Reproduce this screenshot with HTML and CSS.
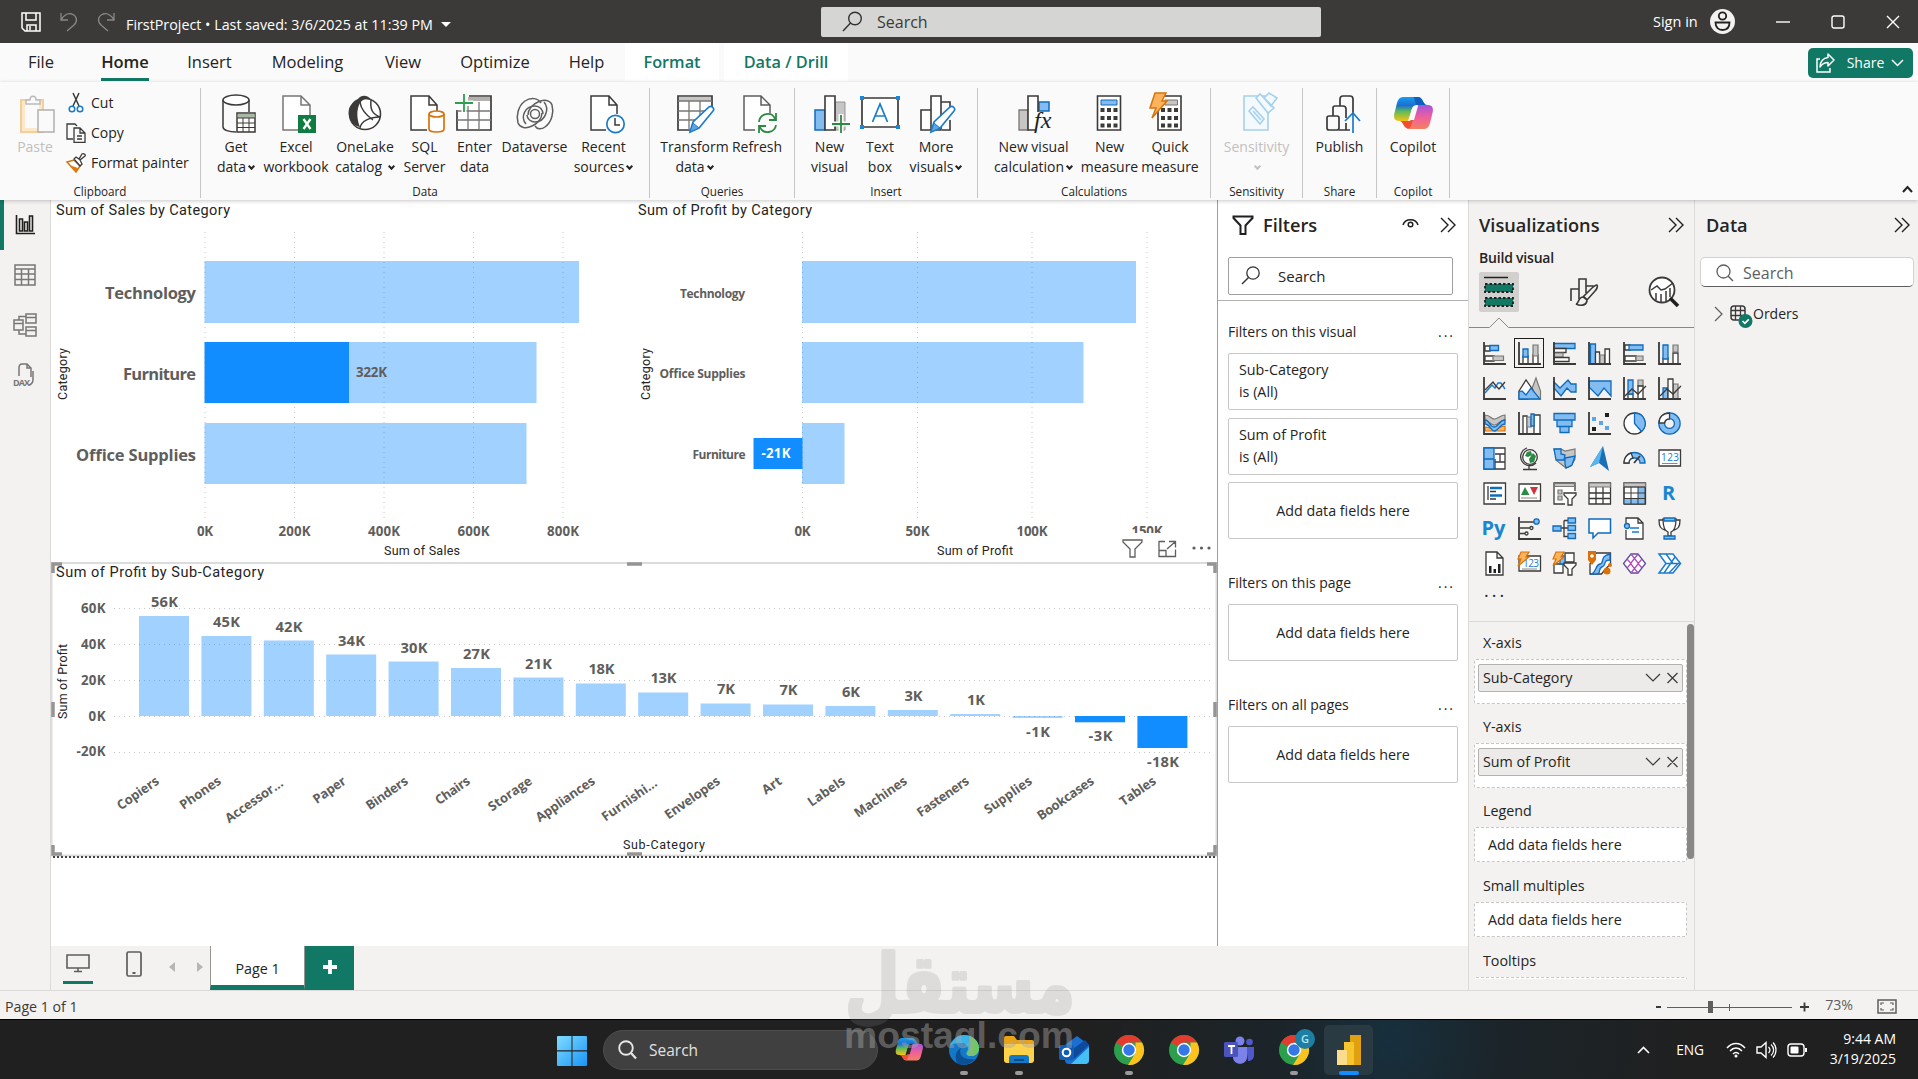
FILE: index.html
```html
<!DOCTYPE html>
<html lang="en">
<head>
    <meta charset="UTF-8">
    <meta name="viewport" content="width=device-width, initial-scale=1.0">
    <title>FirstProject</title>
    <link rel="stylesheet" href="styles.css">
</head>
<body>

    <header class="titlebar">
        <div class="quick">
            <svg width="20" height="20" viewBox="0 0 20 20"><path d="M1 1h18v18H4l-3-3zM5 1v7h10V1M6 19v-6h9v6M9 14v4" fill="none" stroke="#fff" stroke-width="1.5"/></svg>
            <svg width="18" height="20" viewBox="0 0 18 20"><path d="M1 1v7h7M1 8c3-5 7-7 11-6 5 2 6 7 2 11l-7 6" fill="none" stroke="#8a8886" stroke-width="1.3"/></svg>
            <svg width="18" height="20" viewBox="0 0 18 20"><path d="M17 1v7h-7M17 8c-3-5-7-7-11-6-5 2-6 7-2 11l7 6" fill="none" stroke="#8a8886" stroke-width="1.3"/></svg>
        </div>
        <div class="doc-name">FirstProject • Last saved: 3/6/2025 at 11:39 PM <i class="caret"></i></div>
        <div class="top-search">
            <svg width="21" height="21" viewBox="0 0 21 21"><circle cx="13" cy="7.5" r="6.3" fill="none" stroke="#333" stroke-width="1.4"/><path d="M8.5 12L1 20" stroke="#333" stroke-width="1.5"/></svg>
            <span>Search</span>
        </div>
        <div class="account">
            <span>Sign in</span>
            <svg width="25" height="25" viewBox="0 0 25 25"><circle cx="12.500" cy="12.500" r="12.500" fill="#f3f2f1"/><circle cx="12.500" cy="7" r="3.700" fill="none" stroke="#222" stroke-width="1.800"/><path d="M5.500 13.500h14c0 5-3 7.500-7 7.500s-7-2.500-7-7.500z" fill="none" stroke="#222" stroke-width="1.800"/></svg>
        </div>
        <div class="window-buttons">
            <svg width="14" height="14" viewBox="0 0 14 14"><path d="M0 7h14" stroke="#fff" stroke-width="1.4"/></svg>
            <svg width="14" height="14" viewBox="0 0 14 14"><rect x="1" y="1" width="12" height="12" rx="2" fill="none" stroke="#fff" stroke-width="1.4"/></svg>
            <svg width="14" height="14" viewBox="0 0 14 14"><path d="M1 1l12 12M13 1L1 13" stroke="#fff" stroke-width="1.4"/></svg>
        </div>
    </header>

    <nav class="tabs">
        <a>File</a>
        <a class="active"><b>Home</b></a>
        <a>Insert</a>
        <a>Modeling</a>
        <a>View</a>
        <a>Optimize</a>
        <a>Help</a>
        <a class="contextual">Format</a>
        <a class="contextual drill">Data / Drill</a>
        <button class="share">
            <svg width="19" height="20" viewBox="0 0 19 20"><path d="M4 6H1v13h13v-4" fill="none" stroke="#fff" stroke-width="1.500"/><path d="M12 1l6 6-6 6V9.500C8 9.500 6 11 4 14c0-5 3-9 8-9.500z" fill="none" stroke="#fff" stroke-width="1.500" stroke-linejoin="round"/></svg>
            <span>Share</span>
            <svg width="13" height="8" viewBox="0 0 13 8"><path d="M1 1l5.500 5.500L12 1" fill="none" stroke="#fff" stroke-width="1.500"/></svg>
        </button>
    </nav>

    <section class="ribbon">
        <div class="group clipboard">
            <div class="items">
                <div class="cmd disabled">
                    <svg viewBox="0 0 40 40"><path d="M6 6h22v32H6z" fill="#fbe8c9" stroke="#f3cf9b" stroke-width="2"/><path d="M10 10h14v24H10z" fill="#fafafa"/><path d="M11 10V6h4c0-5 6-5 6 0h4v4z" fill="#fafafa" stroke="#bbb" stroke-width="1.500"/><path d="M23 16h16v22H23z" fill="#fafafa" stroke="#b3b0ad" stroke-width="1.500"/></svg>
                    <span>Paste</span>
                </div>
                <ul>
                    <li><svg width="20" height="20" viewBox="0 0 20 20"><path d="M7 0l6 13M13 0L7 13" stroke="#3b3a39" stroke-width="1.500"/><circle cx="6" cy="16" r="2.800" fill="none" stroke="#1a7bc7" stroke-width="1.500"/><circle cx="14" cy="16" r="2.800" fill="none" stroke="#1a7bc7" stroke-width="1.500"/></svg>Cut</li>
                    <li><svg width="20" height="20" viewBox="0 0 20 20"><path d="M7 16H1V1h8l2 2" fill="none" stroke="#3b3a39" stroke-width="1.300"/><path d="M8 5h6l5 5v9.400H8zM14 5v5h5M11 13h5M11 16h5" fill="none" stroke="#3b3a39" stroke-width="1.300"/></svg>Copy</li>
                    <li><svg width="20" height="20" viewBox="0 0 20 20"><path d="M1 9l7-2 6 6-4 6z" fill="#fff" stroke="#d8730b" stroke-width="1.500"/><path d="M3 12l9 3-2 4z" fill="#e07b10"/><path d="M8 6l2-2 3 2 3-5c2-1 4 1 3 2l-5 4 2 4-2 2z" fill="#fff" stroke="#3b3a39" stroke-width="1.300"/></svg>Format painter</li>
                </ul>
            </div>
            <div class="group-name">Clipboard</div>
        </div>
        <div class="group data">
            <div class="items">
                <div class="cmd">
                    <svg viewBox="0 0 40 40"><path d="M7 6v27c0 3 6 5 13 5M33 6v12" fill="none" stroke="#3b3a39" stroke-width="1.500"/><ellipse cx="20" cy="6" rx="13" ry="5" fill="#fff" stroke="#3b3a39" stroke-width="1.500"/><path d="M21 19h18v19H21z" fill="#fff" stroke="#3b3a39" stroke-width="1.500"/><path d="M21.700 20h17v4h-17z" fill="#a9b8a4"/><path d="M21 24h18M21 29h18M21 33.500h18M27 24v14M33 24v14" stroke="#3b3a39"/></svg>
                    <span>Get<br>data<i class="dd"></i></span>
                </div>
                <div class="cmd">
                    <svg viewBox="0 0 40 40"><path d="M22 36H7V2h18l9 9v10M25 2v9h9" fill="#fff" stroke="#797775" stroke-width="1.500"/><path d="M22 21h18v18H22z" fill="#107c41"/><path d="M27.500 25l7 10M34.500 25l-7 10" stroke="#fff" stroke-width="2.300"/></svg>
                    <span>Excel<br>workbook</span>
                </div>
                <div class="cmd">
                    <svg viewBox="0 0 40 40"><circle cx="20" cy="20" r="15.500" fill="#fff" stroke="#3b3a39" stroke-width="1.600"/><path d="M13 5C15 1 23 0 26 6c-5-2-8-1-11 3-4 7-3 17 0 24C4 31 1 17 6 11c2-3 4-5 7-6z" fill="#3b3a39"/><path d="M15 8c1 8 6 13 13 18M26 6c-1 9 1 14 9 17M15 34c1-7 10-11 20-11" fill="none" stroke="#3b3a39" stroke-width="1.500"/></svg>
                    <span>OneLake<br>catalog <i class="dd"></i></span>
                </div>
                <div class="cmd">
                    <svg viewBox="0 0 40 40"><path d="M22 36H6V2h18l8 9v6M24 2v9h8" fill="#fff" stroke="#3b3a39" stroke-width="1.500"/><path d="M24 20v15c0 4 15 4 15 0V20" fill="#fff" stroke="#d8730b" stroke-width="1.700"/><ellipse cx="31.500" cy="20" rx="7.500" ry="3" fill="#fff" stroke="#d8730b" stroke-width="1.700"/></svg>
                    <span>SQL<br>Server</span>
                </div>
                <div class="cmd">
                    <svg viewBox="0 0 40 40"><path d="M2 16v20h34V2H14" fill="#fff" stroke="#3b3a39" stroke-width="1.700"/><path d="M13 3h22v4H13z" fill="#b3b0ad"/><path d="M2 17h34M2 26h34M13 12v24M24 8v28" stroke="#797775" stroke-width="1.300"/><path d="M0 9h18M9 0v18" stroke="#fafafa" stroke-width="5"/><path d="M0 9h18M9 0v18" stroke="#2e9e4f" stroke-width="1.800"/></svg>
                    <span>Enter<br>data</span>
                </div>
                <div class="cmd">
                    <svg viewBox="0 0 40 40"><g fill="none" stroke="#605e5c" stroke-width="1.500"><circle cx="20" cy="20" r="4.500"/><path d="M27 19c0 6-5 11-10 13-6 3-12 2-14-3C1 22 3 12 10 7c6-4 13-3 16 2"/><path d="M13 21c0-6 5-11 10-13 6-3 12-2 14 3 2 7 0 17-7 22-4 3-8 2-10-1"/><path d="M11 30c-6-7-1-18 9-18 5 0 8 4 8 8M29 8c6 7 1 20-9 20-4 0-8-3-8-7"/></g></svg>
                    <span>Dataverse</span>
                </div>
                <div class="cmd">
                    <svg viewBox="0 0 40 40"><path d="M22 36H7V2h18l8 9v9M25 2v9h8" fill="#fff" stroke="#3b3a39" stroke-width="1.500"/><circle cx="31.500" cy="30" r="8.700" fill="#fff" stroke="#1a7bc7" stroke-width="1.700"/><path d="M31 24v7h5" fill="none" stroke="#3b3a39" stroke-width="1.500"/></svg>
                    <span>Recent<br>sources<i class="dd"></i></span>
                </div>
            </div>
            <div class="group-name">Data</div>
        </div>
        <div class="group queries">
            <div class="items">
                <div class="cmd">
                    <svg viewBox="0 0 40 40"><path d="M37 13V2H3v34h13" fill="#fff" stroke="#3b3a39" stroke-width="1.700"/><path d="M4 3h32v4H4z" fill="#c8c6c4"/><path d="M3 7h34M3 17h28M3 26h18M14 7v29M25 7v15" stroke="#797775" stroke-width="1.300"/><path d="M15 38l3-10 16-15c3-2 6 2 4 4L24 34z" fill="#fff" stroke="#1a7bc7" stroke-width="1.600"/><path d="M15 38l3-9 6 5z" fill="#5aa6e6" stroke="#1a7bc7"/></svg>
                    <span>Transform<br>data<i class="dd"></i></span>
                </div>
                <div class="cmd">
                    <svg viewBox="0 0 40 40"><path d="M18 36H7V2h17l9 9v8M24 2v9h9" fill="#fff" stroke="#605e5c" stroke-width="1.500"/><path d="M22 28c1-9 13-11 16-3M39 19v7h-7M39 31c-1 8-13 10-16 2M22 39v-7h7" fill="none" stroke="#2b8a44" stroke-width="1.800"/></svg>
                    <span>Refresh</span>
                </div>
            </div>
            <div class="group-name">Queries</div>
        </div>
        <div class="group insert">
            <div class="items">
                <div class="cmd">
                    <svg viewBox="0 0 40 40"><path d="M25 8h10v28H25z" fill="#c8c6c4" stroke="#979593"/><path d="M5 16h10v20H5z" fill="#83bcf0" stroke="#0f6cbd" stroke-width="1.500"/><path d="M15 2h10v34H15z" fill="#fff" stroke="#3b3a39" stroke-width="1.600"/><path d="M21 30h19M31 20v19" stroke="#fafafa" stroke-width="5"/><path d="M22 30h18M31 21v18" stroke="#2b8a44" stroke-width="1.800"/></svg>
                    <span>New<br>visual</span>
                </div>
                <div class="cmd">
                    <svg viewBox="0 0 40 40"><path d="M2 4h36v29H2z" fill="#fff" stroke="#3b3a39" stroke-width="1.700"/><path d="M0 2h4v4H0zM36 2h4v4h-4zM0 31h4v4H0zM36 31h4v4h-4z" fill="#1a86d9"/><path d="M12.500 28L20 10l7.500 18M15 22h10" fill="none" stroke="#1a7bc7" stroke-width="1.700"/></svg>
                    <span>Text<br>box</span>
                </div>
                <div class="cmd">
                    <svg viewBox="0 0 40 40"><path d="M15 16H5v20h10M25 8h9v6M34 26v10h-8M15 2h10v34H15z" fill="#fff" stroke="#3b3a39" stroke-width="1.600"/><path d="M15 38l3-10 16-15c3-2 6 2 4 4L24 34z" fill="#fff" stroke="#1a7bc7" stroke-width="1.600"/><path d="M15 38l3-9 6 5z" fill="#5aa6e6" stroke="#1a7bc7"/></svg>
                    <span>More<br>visuals<i class="dd"></i></span>
                </div>
            </div>
            <div class="group-name">Insert</div>
        </div>
        <div class="group calculations">
            <div class="items">
                <div class="cmd">
                    <svg viewBox="0 0 40 40"><path d="M25 8h10v9H25z" fill="#83bcf0" stroke="#0f6cbd" stroke-width="1.500"/><path d="M5 16h9v20H5z" fill="#c8c6c4" stroke="#797775" stroke-width="1.300"/><path d="M24 18V2H14v34h7" fill="#fff" stroke="#3b3a39" stroke-width="1.600"/><text x="20" y="34" class="fx">fx</text></svg>
                    <span>New visual<br>calculation<i class="dd"></i></span>
                </div>
                <div class="cmd">
                    <svg viewBox="0 0 40 40"><path d="M7.500 2h23v34h-23z" fill="#fff" stroke="#3b3a39" stroke-width="1.600"/><path d="M11 6h16v5H11z" fill="#83bcf0" stroke="#0f6cbd"/><path d="M10.500 16h17M10.500 24h17M10.500 31.500h17" stroke="#3b3a39" stroke-width="4" stroke-dasharray="4 2.500"/></svg>
                    <span>New<br>measure</span>
                </div>
                <div class="cmd">
                    <svg viewBox="0 0 40 40"><path d="M8 2h23v34H8z" fill="#fff" stroke="#3b3a39" stroke-width="1.600"/><path d="M15 6h12.500v5H15z" fill="#c8c6c4" stroke="#797775"/><path d="M11 16h17M11 24h17M11 31.500h17" stroke="#3b3a39" stroke-width="4" stroke-dasharray="4 2.500"/><path d="M5-1h11l-4 8h5L2 24l4-10H0z" fill="#fdb35c" stroke="#d8730b" stroke-width="1.500"/></svg>
                    <span>Quick<br>measure</span>
                </div>
            </div>
            <div class="group-name">Calculations</div>
        </div>
        <div class="group sensitivity">
            <div class="items">
                <div class="cmd disabled">
                    <svg viewBox="0 0 40 40"><g fill="#f3f9fd" stroke="#a5d1ec" stroke-width="1.600"><path d="M7 2h24v34H7z"/><path d="M12 17l4-4 11 12-4 5zM16 17l8 9M19 4l4-4 14 14-6 5zM27 4l5-5 8 5-6 8z"/></g></svg>
                    <span>Sensitivity<br><i class="dd"></i></span>
                </div>
            </div>
            <div class="group-name">Sensitivity</div>
        </div>
        <div class="group publish">
            <div class="items">
                <div class="cmd">
                    <svg viewBox="0 0 40 40"><g fill="none" stroke="#3b3a39" stroke-width="1.700"><rect x="7" y="22" width="12" height="14" rx="2"/><path d="M13 22V14q0-2 2-2h8q3 0 3 3v9M20 12V5q0-3 3-3h7q3 0 3 3v15M19 36h11M26 29v7"/></g><path d="M33 39V20M25 27l8-8 7 8" fill="none" stroke="#1a7bc7" stroke-width="1.700"/></svg>
                    <span>Publish</span>
                </div>
            </div>
            <div class="group-name">Share</div>
        </div>
        <div class="group copilot">
            <div class="items">
                <div class="cmd">
                    <svg viewBox="0 0 40 40">
                        <defs>
                            <linearGradient id="cpA" x1="0" y1="0" x2="0" y2="1"><stop offset="0" stop-color="#1a9bf0"/><stop offset=".35" stop-color="#1b6fd0"/><stop offset=".6" stop-color="#5dbb5a"/><stop offset="1" stop-color="#f5c414"/></linearGradient>
                            <linearGradient id="cpB" x1="0" y1="0" x2="0" y2="1"><stop offset="0" stop-color="#a554e0"/><stop offset=".5" stop-color="#ee5f9b"/><stop offset="1" stop-color="#f58060"/></linearGradient>
                        </defs>
                        <path d="M10 3h15c5 0 5 8 9 8H24c-4 0-5 3-6 7l-3 9H6c-5 0-6-4-4-10l2-8c1-4 3-6 6-6z" fill="url(#cpA)"/>
                        <path d="M20 3h5c5 0 5 8 9 8H24c-2 0-2-8-4-8z" fill="#0f5fc0"/>
                        <path d="M31 35H16c-5 0-5-8-9-8h9c4 0 5-3 6-7l3-9h10c5 0 6 4 4 10l-2 8c-1 4-3 6-6 6z" fill="url(#cpB)"/>
                        <path d="M7 27h10l4-5-3 10c-1 3-4 3-6 1-2-2-2-5-5-6z" fill="#f0502f"/>
                        <path d="M22 12h3l-4 14h-5l2-8c1-3 2-6 4-6z" fill="#fafafa"/>
                    </svg>
                    <span>Copilot</span>
                </div>
            </div>
            <div class="group-name">Copilot</div>
        </div>
        <svg class="collapse" width="11" height="8" viewBox="0 0 11 8"><path d="M1 7l4.500-5L10 7" fill="none" stroke="#222" stroke-width="2"/></svg>
    </section>

    <main class="workspace">
        <aside class="rail">
            <span class="active"><svg width="20" height="20" viewBox="0 0 20 20"><path d="M1.500 0v18.500H20M4.500 4h3v12h-3zM9.500 7h3v9h-3zM14.500 1h3v15h-3z" fill="none" stroke="#201f1e" stroke-width="1.600"/></svg></span>
            <span><svg width="22" height="22" viewBox="0 0 22 22"><path d="M1 1h20v20H1zM1 5h20M1 10h20M1 15.500h20M7.500 5v16M14.500 5v16" fill="none" stroke="#797775" stroke-width="1.500"/></svg></span>
            <span><svg width="24" height="24" viewBox="0 0 24 24"><path d="M1 7h9v10H1zM1 10.500h9M13 1h10v9H13zM13 4.500h10M13 14h10v9H13zM13 17.500h10M6 7V3.500h7M6 17v4h7" fill="none" stroke="#797775" stroke-width="1.500"/></svg></span>
            <span><svg width="24" height="24" viewBox="0 0 24 24"><path d="M6 13V5q0-4 3-4h5l4 4v9M14 1v4h4M20 8v8q0 5-4 6" fill="none" stroke="#797775" stroke-width="1.500"/><text x="0" y="22.500" class="dax" textLength="17">DAX</text></svg></span>
        </aside>

        <div class="report">
            <div class="canvas">
                <div class="row">
                    <!-- sales by category -->
                    <svg class="chart" width="583" height="362" viewBox="51 200 583 362">
                        <text x="56" y="215" class="title" textLength="174">Sum of Sales by Category</text>
                        <path class="grid" d="M205 232v288M294.500 232v288M384 232v288M473.500 232v288M563 232v288"/>
                        <g class="light">
                            <rect x="204.500" y="261" width="374.500" height="62"/>
                            <rect x="349" y="342" width="187.500" height="61"/>
                            <rect x="204.500" y="423" width="322" height="61"/>
                        </g>
                        <rect class="strong" x="204.500" y="342" width="144.500" height="61"/>
                        <g class="cat-lg">
                            <text x="105" y="299" textLength="91">Technology</text>
                            <text x="123" y="380" textLength="73">Furniture</text>
                            <text x="76" y="461" textLength="120">Office Supplies</text>
                        </g>
                        <text x="356" y="377" class="num" textLength="31">322K</text>
                        <g class="num mid">
                            <text x="205" y="536" textLength="16">0K</text>
                            <text x="294.500" y="536" textLength="32">200K</text>
                            <text x="384" y="536" textLength="32">400K</text>
                            <text x="473.500" y="536" textLength="32">600K</text>
                            <text x="563" y="536" textLength="32">800K</text>
                        </g>
                        <text x="384" y="555" class="axis" textLength="76">Sum of Sales</text>
                        <text transform="translate(67 400) rotate(-90)" class="axis" textLength="52">Category</text>
                    </svg>
                    <!-- profit by category -->
                    <svg class="chart" width="583" height="362" viewBox="634 200 583 362">
                        <text x="638" y="215" class="title" textLength="174">Sum of Profit by Category</text>
                        <path class="grid" d="M802.500 232v288M917.500 232v288M1032 232v288M1147 232v288"/>
                        <g class="light">
                            <rect x="802" y="261" width="334" height="62"/>
                            <rect x="802" y="342" width="281.500" height="61"/>
                            <rect x="802" y="423" width="42.500" height="61"/>
                        </g>
                        <rect class="strong" x="753.500" y="438" width="49" height="31"/>
                        <g class="cat-sm">
                            <text x="680" y="298" textLength="65">Technology</text>
                            <text x="659.500" y="378" textLength="86">Office Supplies</text>
                            <text x="692.500" y="459" textLength="53">Furniture</text>
                        </g>
                        <text x="761.500" y="458" class="num on-bar" textLength="29">-21K</text>
                        <g class="num mid">
                            <text x="802.500" y="536" textLength="16">0K</text>
                            <text x="917.500" y="536" textLength="24">50K</text>
                            <text x="1032" y="536" textLength="31">100K</text>
                            <text x="1147" y="536" textLength="31">150K</text>
                        </g>
                        <path d="M1112 533h105v29h-105z" fill="#fff"/>
                        <text x="937" y="555" class="axis" textLength="76">Sum of Profit</text>
                        <text transform="translate(650 400) rotate(-90)" class="axis" textLength="52">Category</text>
                        <g fill="none" stroke="#605e5c" stroke-width="1.300">
                            <path d="M1123 540h19v2l-7 7v8h-5v-8l-7-7z"/>
                            <path d="M1165 541.500h-6v15h16.500v-7M1169 541.500h6.500v6M1167 549l8-7M1159 550.500h7v6"/>
                        </g>
                        <g fill="#605e5c"><circle cx="1194" cy="548" r="1.600"/><circle cx="1201.500" cy="548" r="1.600"/><circle cx="1209" cy="548" r="1.600"/></g>
                    </svg>
                </div>
                <!-- profit by sub-category, selected -->
                <svg class="chart" width="1166" height="296" viewBox="51 562 1166 296">
                    <path d="M51 563h1166M51.500 563v292M1216.500 563v292M51 855.500h1166" fill="none" stroke="#dcdcdc" stroke-width="2"/>
                    <path d="M53 857h1163" stroke="#444" stroke-width="2" stroke-dasharray="2 2"/>
                    <path d="M53 573v-9h9M627 564h15M1207 564h8v9M53 702v15M1215 702v15M53 845v9h9M627 854h15M1207 854h8v-9" fill="none" stroke="#979593" stroke-width="3.500"/>
                    <text x="56" y="577" class="title" textLength="208">Sum of Profit by Sub-Category</text>
                    <path class="grid" d="M114 608.500h1100M114 644.500h1100M114 680.500h1100M114 716.500h1100M114 752.500h1100"/>
                    <g class="light">
                        <rect x="139" y="616" width="50" height="100"/>
                        <rect x="201.400" y="636" width="50" height="80"/>
                        <rect x="263.800" y="640.500" width="50" height="75.500"/>
                        <rect x="326.200" y="654.500" width="50" height="61.500"/>
                        <rect x="388.600" y="661.500" width="50" height="54.500"/>
                        <rect x="451" y="668" width="50" height="48"/>
                        <rect x="513.400" y="677.500" width="50" height="38.500"/>
                        <rect x="575.800" y="683.500" width="50" height="32.500"/>
                        <rect x="638.200" y="692.500" width="50" height="23.500"/>
                        <rect x="700.600" y="703.500" width="50" height="12.500"/>
                        <rect x="763" y="704.500" width="50" height="11.500"/>
                        <rect x="825.400" y="706" width="50" height="10"/>
                        <rect x="887.800" y="710" width="50" height="6"/>
                        <rect x="950.200" y="714" width="50" height="2"/>
                        <rect x="1012.600" y="716" width="50" height="2"/>
                    </g>
                    <rect class="strong" x="1075" y="716" width="50" height="6.300"/>
                    <rect class="strong" x="1137.400" y="716" width="50" height="32"/>
                    <g class="num end">
                        <text x="105.500" y="613" textLength="24.500">60K</text>
                        <text x="105.500" y="649" textLength="24.500">40K</text>
                        <text x="105.500" y="685" textLength="24.500">20K</text>
                        <text x="105.500" y="721" textLength="17">0K</text>
                        <text x="105.500" y="756" textLength="29">-20K</text>
                    </g>
                    <g class="val mid">
                        <text x="164.500" y="607" textLength="27">56K</text>
                        <text x="226.500" y="627" textLength="27">45K</text>
                        <text x="289" y="632" textLength="27">42K</text>
                        <text x="351.500" y="646" textLength="27">34K</text>
                        <text x="414" y="653" textLength="27">30K</text>
                        <text x="476.500" y="659" textLength="27">27K</text>
                        <text x="538.500" y="669" textLength="27">21K</text>
                        <text x="601.500" y="674" textLength="26">18K</text>
                        <text x="663.500" y="683" textLength="26">13K</text>
                        <text x="726" y="694" textLength="18">7K</text>
                        <text x="788.500" y="695" textLength="18">7K</text>
                        <text x="851" y="697" textLength="18">6K</text>
                        <text x="913.500" y="701" textLength="18">3K</text>
                        <text x="976" y="705" textLength="18">1K</text>
                        <text x="1038" y="737" textLength="24">-1K</text>
                        <text x="1100.500" y="741" textLength="24">-3K</text>
                        <text x="1163" y="767" textLength="32">-18K</text>
                    </g>
                    <g class="slant end">
                        <text transform="translate(160 783) rotate(-35)" textLength="48">Copiers</text>
                        <text transform="translate(222 783) rotate(-35)" textLength="47">Phones</text>
                        <text transform="translate(284 785) rotate(-35)" textLength="67">Accessor…</text>
                        <text transform="translate(347 783) rotate(-35)" textLength="37">Paper</text>
                        <text transform="translate(409 783) rotate(-35)" textLength="48">Binders</text>
                        <text transform="translate(471 783) rotate(-35)" textLength="39">Chairs</text>
                        <text transform="translate(533 783) rotate(-35)" textLength="50">Storage</text>
                        <text transform="translate(596 783) rotate(-35)" textLength="69">Appliances</text>
                        <text transform="translate(658 785) rotate(-35)" textLength="64">Furnishi…</text>
                        <text transform="translate(721 783) rotate(-35)" textLength="64">Envelopes</text>
                        <text transform="translate(783 783) rotate(-35)" textLength="21">Art</text>
                        <text transform="translate(846 783) rotate(-35)" textLength="42">Labels</text>
                        <text transform="translate(908 783) rotate(-35)" textLength="61">Machines</text>
                        <text transform="translate(970 783) rotate(-35)" textLength="60">Fasteners</text>
                        <text transform="translate(1033 783) rotate(-35)" textLength="55">Supplies</text>
                        <text transform="translate(1095 783) rotate(-35)" textLength="66">Bookcases</text>
                        <text transform="translate(1157 783) rotate(-35)" textLength="41">Tables</text>
                    </g>
                    <text x="623" y="849" class="axis" textLength="82">Sub-Category</text>
                    <text transform="translate(67 719) rotate(-90)" class="axis" textLength="75">Sum of Profit</text>
                </svg>
            </div>

            <aside class="filters">
                <div class="pane-head">
                    <svg width="22" height="20" viewBox="0 0 22 20"><path d="M1.500 1.500h19v1.500l-7 7.500V19h-5v-8.500L1.500 3z" fill="none" stroke="#201f1e" stroke-width="2"/></svg>
                    <h2>Filters</h2>
                    <svg class="eye" width="17" height="10" viewBox="0 0 17 10"><path d="M1 7c2-7 13-7 15 0" fill="none" stroke="#201f1e" stroke-width="1.500"/><circle cx="8.500" cy="6.500" r="2.300" fill="none" stroke="#201f1e" stroke-width="1.500"/></svg>
                    <svg width="16" height="16" viewBox="0 0 16 16"><path d="M1 1l7 7-7 7M8 1l7 7-7 7" fill="none" stroke="#201f1e" stroke-width="1.400"/></svg>
                </div>
                <div class="filter-search">
                    <svg width="19" height="19" viewBox="0 0 19 19"><circle cx="12" cy="7" r="6.200" fill="none" stroke="#333" stroke-width="1.300"/><path d="M7.500 11.500L1 18" stroke="#333" stroke-width="1.400"/></svg>
                    <span>Search</span>
                </div>
                <div class="filter-list">
                    <h3>Filters on this visual <i>...</i></h3>
                    <div class="card">Sub-Category<br>is (All)</div>
                    <div class="card">Sum of Profit<br>is (All)</div>
                    <div class="card drop">Add data fields here</div>
                    <h3>Filters on this page <i>...</i></h3>
                    <div class="card drop">Add data fields here</div>
                    <h3>Filters on all pages <i>...</i></h3>
                    <div class="card drop">Add data fields here</div>
                </div>
            </aside>

            <div class="pages">
                <div class="layouts">
                    <span class="active"><svg width="24" height="20" viewBox="0 0 24 20"><path d="M1 2h22v13H1zM12 15v3M8 18.500h8" fill="none" stroke="#605e5c" stroke-width="1.600"/></svg></span>
                    <svg width="16" height="26" viewBox="0 0 16 26"><rect x="1" y="1" width="14" height="24" rx="1.500" fill="none" stroke="#605e5c" stroke-width="1.700"/><path d="M6.500 22h3" stroke="#605e5c" stroke-width="2"/></svg>
                    <i class="prev"></i>
                    <i class="next"></i>
                </div>
                <div class="page-tab">Page 1</div>
                <div class="add-page"><svg width="14" height="14" viewBox="0 0 14 14"><path d="M7 0v14M0 7h14" stroke="#fff" stroke-width="3.800"/></svg></div>
            </div>
        </div>

        <aside class="viz">
            <div class="pane-head">
                <h2>Visualizations</h2>
                <svg width="16" height="16" viewBox="0 0 16 16"><path d="M1 1l7 7-7 7M8 1l7 7-7 7" fill="none" stroke="#201f1e" stroke-width="1.400"/></svg>
            </div>
            <div class="build">Build visual</div>
            <div class="modes">
                <span class="active"><svg width="30" height="32" viewBox="0 0 30 32"><path d="M0 1.500h24" stroke="#201f1e" stroke-width="1.500"/><path d="M1 8h28v8H1zM1 22h28v8H1z" fill="#117865" stroke="#201f1e" stroke-width="1.800" stroke-dasharray="2.500 2"/></svg></span>
                <span class="format"><svg width="30" height="30" viewBox="0 0 30 30"><path d="M2 24V12h8v10M10 14V2h7v14M17 9h7v3" fill="none" stroke="#3b3a39" stroke-width="1.600"/><path d="M28 8c1 1 0 4-2 6l-8 9-4-3 8-8c2-2 4-4 6-4zM14 20c2 0 4 2 4 4-1 5-7 5-11 3 3 0 2-7 7-7z" fill="#f3f2f0" stroke="#3b3a39" stroke-width="1.600"/></svg></span>
                <span><svg width="32" height="32" viewBox="0 0 32 32"><circle cx="14" cy="14" r="12.500" fill="#fff" stroke="#3b3a39" stroke-width="1.800"/><path d="M3 14l6-4 4 4 4-1 8-6" fill="none" stroke="#3b3a39" stroke-width="1.500"/><path d="M8 24v-7M13 26v-8M18 25V15M22 21V12" stroke="#3b3a39" stroke-width="1.500"/><path d="M22 22l8 8" stroke="#201f1e" stroke-width="3.500"/></svg></span>
            </div>
            <svg class="notch" width="225" height="16" viewBox="0 0 225 16"><path d="M0 15.500h20.500l9.500-9.500 9.500 9.500H225" fill="none" stroke="#8a8886"/></svg>
            <div class="gallery">
                <span><svg viewBox="0 0 23 23"><path d="M2 4h5v5H2z" class="w"/><path d="M7 3.500h8.500v5H7z" class="b"/><path d="M2 14h9v5H2z" class="w"/><path d="M10 14h10.500v4.500H10z" class="g"/><path d="M1 0v22h22" class="k"/></svg></span>
                <span class="picked"><svg viewBox="0 0 23 23"><path d="M5 14h5v8H5zM15 13h5v9h-5z" class="w"/><path d="M5 7h5v8H5z" class="b"/><path d="M15 3h5v11h-5z" class="g"/><path d="M1 0v22h22" class="k"/></svg></span>
                <span><svg viewBox="0 0 23 23"><path d="M1 1.500h21v5H1z" class="b"/><path d="M1 6.500h12v4H1z" class="w"/><path d="M1 11h9v4H1z" class="g"/><path d="M1 15.500h15v4H1z" class="w"/><path d="M1 0v22h22" class="k"/></svg></span>
                <span><svg viewBox="0 0 23 23"><path d="M2.500 2h5v20h-5z" class="b"/><path d="M7.500 10h4v12h-4z" class="w"/><path d="M12 13h4.500v9H12z" class="g"/><path d="M17 7h4.500v15H17z" class="w"/><path d="M1 0v22h22" class="k"/></svg></span>
                <span><svg viewBox="0 0 23 23"><path d="M2 3h5v5H2zM2 14h11v5H2z" class="w"/><path d="M6 3h14v5H6z" class="b"/><path d="M13 14h7v4.500h-7z" class="g"/><path d="M1 0v22h22" class="k"/></svg></span>
                <span><svg viewBox="0 0 23 23"><path d="M5 16h5v6H5zM15 11h5v11h-5z" class="w"/><path d="M5 3h5v14H5z" class="b"/><path d="M15 3h5v7h-5z" class="g"/><path d="M1 0v22h22" class="k"/></svg></span>

                <span><svg viewBox="0 0 23 23"><path d="M2 16l7-8 3 3 3-5 3 0 4 6" class="bl"/><path d="M2 13l8-8 3 4 3 3 6-7" class="kl"/><path d="M1 0v22h22" class="k"/></svg></span>
                <span><svg viewBox="0 0 23 23"><path d="M10 22l8-21 4.500 13v8z" class="g"/><path d="M1 14L8 3l7 10-5 9H1z" class="w"/><path d="M1 22v-7l3-1 4 4 5-7 9 11z" class="b"/></svg></span>
                <span><svg viewBox="0 0 23 23"><path d="M1 5l6 6 8-8 3 4h5v8h-5l-4-4-6 8-7-8z" class="b"/><path d="M1 0v22h22" class="k"/></svg></span>
                <span><svg viewBox="0 0 23 23"><path d="M1 4h22v15l-7-8-6 8-9-9z" class="b"/><path d="M1 0v22h22" class="k"/></svg></span>
                <span><svg viewBox="0 0 23 23"><path d="M15 3h5v6h-5z" class="g"/><path d="M5 17h5v5H5zM15 9h5v13h-5z" class="w"/><path d="M5 3h5v14H5z" class="b"/><path d="M2 19l7-7 6 5 8-8" class="kl"/><path d="M1 0v22h22" class="k"/></svg></span>
                <span><svg viewBox="0 0 23 23"><path d="M15 7h5v15h-5z" class="g"/><path d="M5 11h5v11H5z" class="b"/><path d="M10 2h5v20h-5z" class="w"/><path d="M2 19l7-7 6 5 8-8" class="kl"/><path d="M1 0v22h22" class="k"/></svg></span>

                <span><svg viewBox="0 0 23 23"><path d="M2 15c5 0 5 2 9 2s6-3 11-3v5H2z" class="o"/><path d="M2 3c6 0 6 5 10 4s6-4 10-4v5c-5 0-6 4-10 5S7 9 2 9z" class="g"/><path d="M2 8c5 0 4 7 9 7s5-7 11-7v4c-5 0-6 6-10 7S7 12 2 12z" class="b"/><path d="M1 0v22h22" class="k"/></svg></span>
                <span><svg viewBox="0 0 23 23"><path d="M5 4h4v18H5zM16 3h6v19h-6z" class="w"/><path d="M9 5h4v10H9z" class="g"/><path d="M13 2h3v12h-3z" class="b"/><path d="M1 0v22h22" class="k"/></svg></span>
                <span><svg viewBox="0 0 23 23"><path d="M1 1.500h21V8H1zM4 8h15v6.500H4zM7 14.500h9v6H7z" class="b"/></svg></span>
                <span><svg viewBox="0 0 23 23"><path d="M4 5h4v4H4zM11 9h4v4h-4zM17 14h4v4h-4z" fill="#5aa6e6"/><path d="M17 1h4v4h-4zM4 15h4v4H4z" fill="#201f1e"/><path d="M1 0v22h22" class="k"/></svg></span>
                <span><svg viewBox="0 0 23 23"><circle cx="11.500" cy="11.500" r="10.500" class="w"/><path d="M11.500 1a10.500 10.500 0 0 1 7 18.500l-7-8z" class="b"/></svg></span>
                <span><svg viewBox="0 0 23 23"><circle cx="11.500" cy="11.500" r="7.800" fill="none" stroke="#0f6cbd" stroke-width="7"/><circle cx="11.500" cy="11.500" r="7.800" fill="none" stroke="#83bcf0" stroke-width="4.500"/><path d="M11.500 1v6A5 5 0 0 0 6.500 11H1C1 5 5 1 11.500 1z" class="w"/></svg></span>

                <span><svg viewBox="0 0 23 23"><path d="M1 1h21v21H1zM12 12v10M12 7h10M17 7v8M12 15h10" class="w"/><path d="M1 1h10v21H1zM1 12h10" class="b"/></svg></span>
                <span><svg viewBox="0 0 23 23"><path d="M9 1a9 9 0 1 0 9 15M11 19v3M5 22.500h14" class="kl"/><circle cx="12" cy="10" r="7.300" class="w"/><path d="M9 5l4-1 1 4-4 2-3-1zM15 6l3 3-2 6-4 1-1-4z" fill="#2b8a44"/></svg></span>
                <span><svg viewBox="0 0 23 23"><path d="M1 2h7l4 2 10-2v10l-4 7-5 2-9-7z" class="g"/><path d="M1 2h7v5l4 1-1 5H3zM12 11l10-2-3 9-6 3-1-4z" class="b"/></svg></span>
                <span><svg viewBox="0 0 23 23"><path d="M15-1L2 20l9-4 10 8z" fill="#1a6fb5"/><path d="M15-1L2 20l9-4z" fill="#58b6ee"/></svg></span>
                <span><svg viewBox="0 0 23 23"><path d="M1 16a10.500 10.500 0 0 1 21 0h-5c0-3-2-5-5.500-5S6 13 6 16z" class="b"/><path d="M1 16C1 11 4 7 8 6l2 5c-2 0-4 2-4 5z" class="w"/><path d="M11 16l6-7" class="k"/></svg></span>
                <span><svg viewBox="0 0 23 23"><path d="M1 3h21.500v16H1z" class="w"/><path d="M4 16.500h15.500" stroke="#8a8886" fill="none"/><text x="3" y="13.500" class="t123" textLength="18">123</text></svg></span>

                <span><svg viewBox="0 0 23 23"><path d="M1 1h21.500v21H1z" class="w"/><path d="M5 4v14M7 9.500h6M7 17h6" class="kl"/><path d="M7 6h12M7 13.500h12" stroke="#0f6cbd" stroke-width="2.500"/></svg></span>
                <span><svg viewBox="0 0 23 23"><path d="M1 2h21.500v17H1z" class="w"/><path d="M3 13l4-8 4.500 8z" fill="#2b8a44"/><path d="M12 5h8l-4 8z" fill="#d13438"/><path d="M3 16h16" stroke="#8a8886"/></svg></span>
                <span><svg viewBox="0 0 23 23"><path d="M22 9V1H1v21h11" class="w"/><path d="M1.500 1.500h20v3h-20zM5 8h4v4H5zM5 14h4v4H5z" class="g"/><path d="M11 11h12v2l-4 4v6h-4v-6l-4-4z" class="w"/></svg></span>
                <span><svg viewBox="0 0 23 23"><path d="M1 1h21.500v21H1zM1 11h21M1 16.500h21M8 5v17M15 5v17" class="w"/><path d="M1 1h21.500v4H1z" class="g"/></svg></span>
                <span><svg viewBox="0 0 23 23"><path d="M1 1h21.500v21H1z" class="w"/><path d="M15 5h7v17H1v-5h14z" fill="#83bcf0"/><path d="M1 1h21.500v4H1z" class="g"/><path d="M1 5h21v17H1zM1 11h21M1 16.500h21M8 5v17M15 5v17" class="bl thin"/></svg></span>
                <span class="letter">R</span>

                <span class="letter">Py</span>
                <span><svg viewBox="0 0 23 23"><path d="M2 5h16M2 11h10M2 16.500h5" class="kl"/><circle cx="18.500" cy="4.500" r="2.700" class="b"/><circle cx="13.500" cy="11" r="1.500" class="w"/><circle cx="8.500" cy="16.500" r="1.500" class="w"/><path d="M1 0v22h22" class="k"/></svg></span>
                <span><svg viewBox="0 0 23 23"><path d="M8 11h7M11 3.500v16h4M11 3.500h4" class="kl"/><path d="M0 9h8v5H0zM15 1h7.500v5H15zM15 8.500h7.500v5H15zM15 16.500h7.500v5H15z" class="b"/></svg></span>
                <span><svg viewBox="0 0 23 23"><path d="M1 2h21.500v14H10l-5 5v-5H1z" fill="#fff" stroke="#0f6cbd" stroke-width="1.500"/></svg></span>
                <span><svg viewBox="0 0 23 23"><path d="M3 6V1h12l5 5v16H3V13M15 1v5h5" class="w"/><path d="M7 11h9M9 15h7" class="bl"/><circle cx="4" cy="9" r="2.500" class="b"/></svg></span>
                <span><svg viewBox="0 0 23 23"><path d="M5 3H1c0 7 2 9 6 10M18 3h4c0 7-2 9-6 10M5 2h13c0 9-2 12-5 13v4h-3v-4C7 14 5 11 5 2z" class="w"/><path d="M6 1h11v3H6zM6 19h11v3H6z" class="b"/></svg></span>

                <span><svg viewBox="0 0 23 23"><path d="M3 0h11l6 6v17H3zM14 0v6h6" class="w"/><path d="M6 21v-7h2.500v7zM10.500 21v-4H13v4zM15 21v-9h2.500v9z" fill="#201f1e"/></svg></span>
                <span><svg viewBox="0 0 23 23"><path d="M1 4h21.500v15H1z" class="w"/><path d="M4 17h15" stroke="#8a8886"/><text x="5" y="15" class="t123" textLength="16">123</text><path d="M3 0h8L8 5h3L0 14l3-7H0z" class="o"/></svg></span>
                <span><svg viewBox="0 0 23 23"><path d="M12 1h9v9h-9zM1 12h9v9H1z" class="w"/><path d="M7 4h5v8H7z" class="b"/><path d="M11 11h12v2l-4 4v6h-4v-6l-4-4z" class="w"/><path d="M3 0h8L8 5h3L0 14l3-7H0z" class="o"/></svg></span>
                <span><svg viewBox="0 0 23 23"><path d="M8 1h14.500v11l-5 5-4 5H2V12z" class="w"/><path d="M22 2v6c-8 0-3 6-8 7-4 1-1 7-5 7H4c5-3 3-9 8-10s-1-8 10-10z" class="b"/><path d="M0-1h8v9l-4 5-4-5z" fill="#d8730b"/><circle cx="4" cy="4" r="1.800" fill="#fff"/><circle cx="19" cy="19" r="3.500" fill="#d8730b"/><circle cx="22" cy="13" r="2" fill="#d8730b"/></svg></span>
                <span><svg viewBox="0 0 23 23"><path d="M8 2h7l7.500 9.500L15 21H8L.5 11.500z" fill="#fff" stroke="#5c4ea0" stroke-width="1.300"/><path d="M8 2l7.500 9.500L8 21M15 2L7.500 11.500 15 21M4 7l4 4.500L4 16M19 7l-4 4.500 4 4.500" fill="none" stroke="#b44ac0" stroke-width="1.300"/></svg></span>
                <span><svg viewBox="0 0 23 23"><path d="M1 2h14l7.500 9.500L15 21H1l7-9.500z" fill="#fff" stroke="#1a7bd0" stroke-width="1.500"/><path d="M8 11.500h14M6 21L17 5M11 21l9-9.500M8 2l7 9.500" fill="none" stroke="#1a7bd0" stroke-width="1.400"/></svg></span>
            </div>
            <div class="more">...</div>
            <div class="wells">
                <h4>X-axis</h4>
                <div class="well filled"><div class="chip">Sub-Category <svg width="33" height="12" viewBox="0 0 33 12"><path d="M1 2l7 7 7-7M22.500 1l10 10M32.500 1l-10 10" fill="none" stroke="#3b3a39" stroke-width="1.200"/></svg></div></div>
                <h4>Y-axis</h4>
                <div class="well filled"><div class="chip">Sum of Profit <svg width="33" height="12" viewBox="0 0 33 12"><path d="M1 2l7 7 7-7M22.500 1l10 10M32.500 1l-10 10" fill="none" stroke="#3b3a39" stroke-width="1.200"/></svg></div></div>
                <h4>Legend</h4>
                <div class="well">Add data fields here</div>
                <h4>Small multiples</h4>
                <div class="well">Add data fields here</div>
                <h4>Tooltips</h4>
                <div class="well cut"></div>
                <i class="scrollbar"></i>
            </div>
        </aside>

        <aside class="fields">
            <div class="pane-head">
                <h2>Data</h2>
                <svg width="16" height="16" viewBox="0 0 16 16"><path d="M1 1l7 7-7 7M8 1l7 7-7 7" fill="none" stroke="#201f1e" stroke-width="1.400"/></svg>
            </div>
            <div class="field-search">
                <svg width="18" height="18" viewBox="0 0 18 18"><circle cx="7.500" cy="7.500" r="6.500" fill="none" stroke="#605e5c" stroke-width="1.300"/><path d="M12 12l5 5" stroke="#605e5c" stroke-width="1.400"/></svg>
                <span>Search</span>
            </div>
            <div class="table-row">
                <svg width="9" height="16" viewBox="0 0 9 16"><path d="M1 1l7 7-7 7" fill="none" stroke="#605e5c" stroke-width="1.200"/></svg>
                <svg class="tbl" width="23" height="24" viewBox="0 0 23 24"><rect x="1" y="1" width="14" height="14" rx="3" fill="none" stroke="#3b3a39" stroke-width="1.500"/><path d="M1 5.500h14M1 10.500h14M5.500 1v14M10.500 1v14" stroke="#3b3a39" stroke-width="1.300"/><circle cx="15.500" cy="16" r="7" fill="#117865"/><path d="M12.500 16l2.300 2.300 4-4" fill="none" stroke="#fff" stroke-width="1.700"/></svg>
                <span>Orders</span>
            </div>
        </aside>
    </main>

    <footer class="status">
        <span>Page 1 of 1</span>
        <div class="zoom">
            <svg width="154" height="16" viewBox="0 0 154 16"><path d="M1 8h5M145 8h9M149.500 3.500v9" stroke="#3b3a39" stroke-width="1.800"/><path d="M12 8.500h125M74.500 5v7" stroke="#605e5c"/><path d="M53 2h5v12h-5z" fill="#605e5c"/></svg>
            <span>73%</span>
            <svg width="20" height="15" viewBox="0 0 20 15"><path d="M1 1h18v13H1z" fill="none" stroke="#605e5c" stroke-width="1.500"/><path d="M4 6V4h3M13 4h3v2M16 9v2h-3M7 11H4V9" fill="none" stroke="#605e5c" stroke-width="1.200"/></svg>
        </div>
    </footer>

    <footer class="taskbar">
        <svg class="start" width="30" height="30" viewBox="0 0 30 30"><defs><linearGradient id="win" x1="0" y1="0" x2="1" y2="1"><stop offset="0" stop-color="#7fdcff"/><stop offset="1" stop-color="#1a94f5"/></linearGradient></defs><path d="M1 0h13.500v14.300H0V1q0-1 1-1zM15.500 0H29q1 0 1 1v13.300H15.500zM0 15.500h14.500V30H1q-1 0-1-1zM15.500 15.500H30V29q0 1-1 1H15.500z" fill="url(#win)"/></svg>
        <div class="task-search">
            <svg width="19" height="20" viewBox="0 0 19 20"><circle cx="8" cy="8" r="6.800" fill="none" stroke="#e6e6e6" stroke-width="1.900"/><path d="M13 13l5 5.500" stroke="#e6e6e6" stroke-width="2.200"/></svg>
            <span>Search</span>
        </div>
        <div class="apps">
            <span><svg width="28" height="28" viewBox="0 0 40 40"><path d="M10 3h15c5 0 5 8 9 8H24c-4 0-5 3-6 7l-3 9H6c-5 0-6-4-4-10l2-8c1-4 3-6 6-6z" fill="url(#cpA)"/><path d="M31 35H16c-5 0-5-8-9-8h9c4 0 5-3 6-7l3-9h10c5 0 6 4 4 10l-2 8c-1 4-3 6-6 6z" fill="url(#cpB)"/><path d="M7 27h10l4-5-3 10c-1 3-4 3-6 1-2-2-2-5-5-6z" fill="#f0502f"/><path d="M22 12h3l-4 14h-5l2-8c1-3 2-6 4-6z" fill="#292929"/></svg></span>
            <span class="running"><svg width="30" height="30" viewBox="0 0 30 30"><circle cx="15" cy="15" r="15" fill="#1478c8"/><path d="M1 11C4 3 10 0 15 0c9 0 15 6 15 13 0 5-3 8-8 8-4 0-5-2-4-4 3-5-1-9-6-9S3 9 1 11z" fill="#38b4e8"/><path d="M20 1c6 2 10 7 10 12 0 5-3 8-8 8-4 0-5-2-4-4 3-2 5-8 2-16z" fill="#6ccb5f"/><path d="M12 13c-3 6 2 13 14 11-4 5-11 7-17 5-4-5-3-13 3-16z" fill="#0c4f94"/></svg></span>
            <span class="running"><svg width="30" height="28" viewBox="0 0 30 28"><path d="M0 2q0-2 2-2h8l3 4h15q2 0 2 2v18H0z" fill="#e8a317"/><path d="M0 8h30v16q0 3-3 3H3q-3 0-3-3z" fill="#ffd24a"/><path d="M5 27v-5q0-3 3-3h14q3 0 3 3v5z" fill="#1478c8"/><path d="M10 23h10v2H10z" fill="#0b4f8a"/></svg></span>
            <span><svg width="30" height="28" viewBox="0 0 30 28"><path d="M6 9l12-9 12 9v15q0 4-4 4H10q-4 0-4-4z" fill="#1a6fd0"/><path d="M10 16L26 4l4 5-15 14z" fill="#0d4a9c"/><path d="M12 28l18-17v13q0 4-4 4z" fill="#45c0f5"/><rect y="9" width="15" height="15" rx="2" fill="#0f5fb8"/><circle cx="7.500" cy="16.500" r="3.800" fill="none" stroke="#fff" stroke-width="2"/></svg></span>
            <span class="running"><svg width="30" height="30" viewBox="0 0 30 30" class="chrome"><circle cx="15" cy="15" r="15" fill="#2b9f4c"/><path d="M15 15L2 7.500A15 15 0 0 1 28 7.500H15z" fill="#e33b2e"/><path d="M28 7.500A15 15 0 0 1 14 30l7.500-12V7.500z" fill="#fcc31e"/><circle cx="15" cy="15" r="7.200" fill="#fff"/><circle cx="15" cy="15" r="5.700" fill="#3378e6"/></svg></span>
            <span><svg width="30" height="30" viewBox="0 0 30 30" class="chrome"><circle cx="15" cy="15" r="15" fill="#2b9f4c"/><path d="M15 15L2 7.500A15 15 0 0 1 28 7.500H15z" fill="#e33b2e"/><path d="M28 7.500A15 15 0 0 1 14 30l7.500-12V7.500z" fill="#fcc31e"/><circle cx="15" cy="15" r="7.200" fill="#fff"/><circle cx="15" cy="15" r="5.700" fill="#3378e6"/></svg></span>
            <span><svg width="30" height="28" viewBox="0 0 30 28"><circle cx="16" cy="5" r="4.500" fill="#7b83eb"/><circle cx="25.500" cy="6" r="3.300" fill="#5059c9"/><path d="M22 11h8v8c0 4-3 6-6 6z" fill="#5059c9"/><path d="M9 11h14v10c0 9-14 9-14 0z" fill="#7b83eb"/><rect y="6" width="14" height="15" rx="1.500" fill="#4b53bc"/><path d="M4 10h7M7.500 10v8" stroke="#fff" stroke-width="1.800"/></svg></span>
            <span class="running"><svg width="30" height="30" viewBox="0 0 30 30" class="chrome"><circle cx="15" cy="15" r="15" fill="#2b9f4c"/><path d="M15 15L2 7.500A15 15 0 0 1 28 7.500H15z" fill="#e33b2e"/><path d="M28 7.500A15 15 0 0 1 14 30l7.500-12V7.500z" fill="#fcc31e"/><circle cx="15" cy="15" r="7.200" fill="#fff"/><circle cx="15" cy="15" r="5.700" fill="#3378e6"/></svg><b class="badge">G</b></span>
            <span class="running current"><svg width="24" height="30" viewBox="0 0 24 30"><path d="M13 0h11v30H13z" fill="#e0a010"/><path d="M7 7h10v23H7z" fill="#f6c52c"/><path d="M0 15h10v15H0z" fill="#fbdc8c"/></svg></span>
        </div>
        <div class="tray">
            <svg width="13" height="8" viewBox="0 0 13 8"><path d="M1 7l5.500-5.500L12 7" fill="none" stroke="#fff" stroke-width="1.600"/></svg>
            <span class="lang">ENG</span>
            <svg class="wifi" width="20" height="16" viewBox="0 0 20 16"><path d="M1 6c5-6 13-6 18 0M4 9c3.500-4 8.500-4 12 0M7 12c2-2 4-2 6 0" fill="none" stroke="#fff" stroke-width="1.500"/><circle cx="10" cy="14" r="1.500" fill="#fff"/></svg>
            <svg class="speaker" width="20" height="18" viewBox="0 0 20 18"><path d="M1 6h4l5-4.500v15L5 12H1z" fill="none" stroke="#fff" stroke-width="1.400"/><path d="M12.500 6c2 2 2 4 0 6M15 3.500c3.500 3 3.500 8 0 11M17 1.500c4 4 4 11 0 15" fill="none" stroke="#fff" stroke-width="1.200"/></svg>
            <svg width="21" height="14" viewBox="0 0 21 14"><rect x="1" y="1" width="16" height="12" rx="3" fill="none" stroke="#fff" stroke-width="1.400"/><rect x="3.500" y="3.500" width="8" height="7" rx="1" fill="#fff"/><path d="M19 5v4" stroke="#fff" stroke-width="2"/></svg>
            <div class="clock">9:44 AM<br>3/19/2025</div>
        </div>
    </footer>

    <div class="watermark">
        <svg width="240" height="112" viewBox="0 0 240 112">
            <text transform="translate(235 69) scale(1 1.3)" class="ar" direction="rtl" textLength="230" lengthAdjust="spacingAndGlyphs">مستقل</text>
            <text x="4" y="105" class="en" textLength="230" lengthAdjust="spacingAndGlyphs">mostaql.com</text>
        </svg>
    </div>

</body>
</html>
```
FILE: styles.css
```css
* {
  box-sizing: border-box;
}

body {
  margin: 0;
  width: 1918px;
  height: 1079px;
  overflow: hidden;
  position: relative;
  display: flex;
  flex-direction: column;
  font-family: "Open Sans", "Noto Sans", sans-serif;
  font-size: 14px;
  line-height: 20px;
  color: #252423;
  background: #f3f2f0;
}

h2, h3, h4, ul {
  margin: 0;
  padding: 0;
  font-weight: normal;
}

i {
  font-style: normal;
}

svg {
  display: block;
  flex: none;
  overflow: visible;
}

/* title bar */
.titlebar {
  height: 43px;
  flex: none;
  display: flex;
  align-items: center;
  background: #3b3a38;
  color: #fff;
}

.quick {
  width: 126px;
  padding-left: 21px;
  display: flex;
  gap: 19px;
}

.doc-name {
  width: 695px;
  padding-top: 6px;
  font-size: 14.300px;
  letter-spacing: 0;
  white-space: nowrap;
}

.caret {
  display: inline-block;
  margin: 0 0 3px 4px;
  border: 5px solid transparent;
  border-top-color: #fff;
  border-bottom: 0;
}

.top-search {
  width: 500px;
  height: 30px;
  display: flex;
  align-items: center;
  gap: 14px;
  padding-left: 21px;
  border-radius: 2px;
  background: #d5d5d3;
  color: #3b3a39;
  font-size: 16px;
}

.account {
  width: 415px;
  padding-left: 332px;
  display: flex;
  align-items: center;
  gap: 12px;
  white-space: nowrap;
  font-size: 14.500px;
}

.window-buttons {
  display: flex;
  gap: 41px;
  margin-left: 40px;
}

/* tabs */
.tabs {
  height: 39px;
  flex: none;
  display: grid;
  grid-template-columns: 82px 86px 83px 113px 78px 106px 77px 94px 129px 1fr;
  background: #fafafa;
  font-size: 16.500px;
}

.tabs a {
  height: 38px;
  line-height: 38px;
  text-align: center;
  white-space: nowrap;
}

.tabs .active b {
  display: inline-block;
  height: 38px;
  font-weight: 600;
  border-bottom: 3px solid #117865;
}

.tabs .contextual {
  background: #fff;
  color: #117865;
  font-weight: 600;
  font-size: 16.300px;
}

.tabs .drill {
  margin-left: 5px;
}

.share {
  width: 105px;
  height: 30px;
  margin: 5px 5px 0 auto;
  padding: 0 9px 0 8px;
  display: flex;
  align-items: center;
  justify-content: space-between;
  border: 0;
  border-radius: 5px;
  background: #117865;
  color: #fff;
  font: 14px "Open Sans", sans-serif;
}

.share span {
  margin: -2px 0 0 5px;
}

/* ribbon */
.ribbon {
  height: 118px;
  flex: none;
  display: flex;
  position: relative;
  z-index: 2;
  background: #fafafa;
  box-shadow: 0 1px 4px rgba(0, 0, 0, .22);
}

.group {
  height: 110px;
  margin-top: 6px;
  border-right: 1px solid #c8c6c4;
}

.items {
  height: 94px;
  padding-top: 6px;
  display: grid;
}

.group-name {
  text-align: center;
  font-size: 11.700px;
  line-height: 18px;
}

.cmd {
  display: flex;
  flex-direction: column;
  align-items: center;
  text-align: center;
  white-space: nowrap;
}

.cmd svg {
  width: 40px;
  height: 40px;
  margin-bottom: 3px;
}

.cmd.disabled {
  color: #c2c0be;
}

.dd {
  display: inline-block;
  width: 5px;
  height: 5px;
  margin: 0 1px 3px 3px;
  border: solid currentColor;
  border-width: 0 2px 2px 0;
  transform: rotate(45deg);
}

.clipboard { width: 201px; }
.clipboard .items { grid-template-columns: 70px 1fr; }
.clipboard ul {
  list-style: none;
}
.clipboard li {
  height: 30px;
  display: flex;
  align-items: center;
  gap: 5px;
  margin-left: -4px;
  position: relative;
  top: -6px;
}
.data { width: 449px; }
.data .items { grid-template-columns: 60px 60px 78px 41px 59px 61px 77px; padding-left: 5px; }
.queries { width: 145px; }
.queries .items { grid-template-columns: 75px 50px; padding-left: 7px; }
.insert { width: 183px; }
.insert .items { grid-template-columns: 53px 48px 64px; padding-left: 8px; }
.calculations { width: 233px; }
.calculations .items { grid-template-columns: 101px 51px 70px; padding-left: 5px; }
.sensitivity { width: 92px; }
.publish { width: 74px; }
.copilot { width: 73px; }

.collapse {
  margin: 103px 5px 0 auto;
}

.fx {
  font: italic 24px "Liberation Serif", serif;
  fill: #201f1e;
}

/* workspace */
.workspace {
  height: 791px;
  flex: none;
  display: grid;
  grid-template-columns: 51px 1417px 226px 224px;
  border-bottom: 1px solid #dcdad8;
}

.rail {
  border-right: 1px solid #dcdad8;
}

.rail span {
  height: 50px;
  display: flex;
  align-items: center;
  justify-content: center;
}

.rail .active {
  border-left: 4px solid #117865;
  padding-right: 4px;
}

.dax {
  font: bold 9px "Open Sans", sans-serif;
  fill: #797775;
}

.report {
  display: grid;
  grid-template-columns: 1166px 251px;
  grid-template-rows: 746px 44px;
}

.canvas {
  background: #fff;
}

.row {
  display: flex;
}

.chart text {
  fill: #605e5c;
}

.chart .title,
.chart .axis {
  font-family: Roboto, sans-serif;
  font-size: 14.500px;
  fill: #252423;
}

.chart .axis {
  font-size: 12.500px;
}

.grid {
  fill: none;
  stroke: #c8c6c4;
  stroke-dasharray: 1 4;
}

.light {
  fill: #118dff;
  fill-opacity: .4;
}

.strong {
  fill: #118dff;
}

.cat-lg { font-size: 16.500px; font-weight: 700; }
.cat-sm { font-size: 12px; font-weight: 700; }
.num { font-size: 13.300px; font-weight: 700; }
.val { font-size: 14.700px; font-weight: 700; }
.slant { font-size: 13px; font-weight: 700; }
.mid { text-anchor: middle; }
.end { text-anchor: end; }
.chart .on-bar { fill: #fff; }

/* filters pane */
.filters {
  background: #fff;
  border-left: 1px solid #a19f9d;
}

.pane-head {
  height: 50px;
  display: flex;
  align-items: center;
  justify-content: space-between;
}

.pane-head h2 {
  font-size: 18.200px;
  font-weight: 600;
}

.filters .pane-head {
  padding: 0 12px 0 14px;
}

.filters h2 {
  margin: 0 auto 0 9px;
}

.eye {
  margin: 0 21px 4px 0;
}

.filter-search {
  width: 225px;
  height: 38px;
  margin: 7px 0 0 10px;
  padding: 0 0 1px 12px;
  display: flex;
  align-items: center;
  gap: 18px;
  border: 1px solid #a19f9d;
  border-radius: 2px;
  font-size: 15px;
}

.filter-list {
  margin-top: 5px;
  padding: 21px 10px 0 10px;
  border-top: 1px solid #b3b0ad;
}

.filter-list h3 {
  display: flex;
  justify-content: space-between;
  padding-right: 3px;
  font-size: 14px;
  margin-bottom: 11px;
}

.filter-list i {
  letter-spacing: 2px;
}

.card {
  height: 57px;
  margin-bottom: 8px;
  padding: 5px 10px;
  border: 1px solid #c8c6c4;
  border-radius: 2px;
  line-height: 22px;
  font-size: 14.300px;
}

.card.drop {
  display: flex;
  align-items: center;
  justify-content: center;
  margin: -1px 0 34px;
}

.card.drop + h3 {
  margin-bottom: 12px;
}

/* page tabs */
.pages {
  grid-column: 1 / 3;
  display: flex;
}

.layouts {
  width: 159px;
  padding-left: 12px;
  display: flex;
}

.layouts .active {
  width: 30px;
  height: 38px;
  padding: 7px 3px 0;
  border-bottom: 3px solid #117865;
}

.layouts > svg {
  margin: 5px 27px 0 33px;
}

.prev, .next {
  height: 10px;
  margin-top: 16px;
  border: 5px solid transparent;
}

.prev {
  border-right: 6px solid #b8b6b4;
  border-left: 0;
}

.next {
  margin-left: 22px;
  border-left: 6px solid #b8b6b4;
  border-right: 0;
}

.page-tab {
  width: 95px;
  padding-top: 13px;
  text-align: center;
  background: #fff;
  border-left: 1px solid #979593;
  border-right: 1px solid #979593;
  border-bottom: 5px solid #117865;
  font-size: 14.300px;
  font-weight: 500;
}

.add-page {
  width: 49px;
  display: flex;
  align-items: center;
  justify-content: center;
  padding-bottom: 3px;
  background: #117865;
}

/* visualizations pane */
.viz,
.fields {
  border-left: 1px solid #dcdad8;
}

.viz .pane-head {
  padding: 0 10px;
}

.build {
  height: 17px;
  padding-left: 10px;
  line-height: 15px;
  font-size: 14px;
  font-weight: 600;
  letter-spacing: -.2px;
}

.modes {
  margin-top: 5px;
  padding: 0 10px 0 10px;
  display: flex;
  justify-content: space-between;
}

.modes span {
  width: 40px;
  height: 40px;
  display: flex;
  align-items: center;
  justify-content: center;
}

.modes .active {
  background: #d2d0ce;
  border-radius: 2px;
}

.modes .format {
  padding-left: 4px;
}

.gallery {
  margin: 8px 0 0 8px;
  display: grid;
  grid-template-columns: repeat(6, 35px);
  grid-auto-rows: 35px;
}

.gallery span {
  display: flex;
  align-items: center;
  justify-content: center;
}

.gallery svg {
  width: 23px;
  height: 23px;
}

.gallery .picked {
  margin: 2px 3px 3px 2px;
  border: 1px solid #201f1e;
}

.gallery .letter {
  padding: 0 2px 2px 0;
  color: #1a86d0;
  font-size: 20px;
  font-weight: 700;
}

.k { fill: none; stroke: #3b3a39; stroke-width: 1.800; }
.kl { fill: none; stroke: #3b3a39; stroke-width: 1.300; }
.bl { fill: none; stroke: #1a7bd0; stroke-width: 1.400; }
.thin { stroke: #3b3a39; stroke-width: 1; }
.w { fill: #fff; stroke: #3b3a39; stroke-width: 1.300; }
.b { fill: #83bcf0; stroke: #0f6cbd; stroke-width: 1.300; }
.g { fill: #c8c6c4; stroke: #797775; stroke-width: 1.200; }
.o { fill: #fdb35c; stroke: #d8730b; stroke-width: 1.200; }
.t123 { font: 10px "Open Sans", sans-serif; fill: #1a7bd0; }

.more {
  height: 40px;
  padding-left: 15px;
  font-size: 18px;
  line-height: 19px;
  letter-spacing: 3px;
}

.wells {
  height: 358px;
  position: relative;
  overflow: hidden;
  border-top: 1px solid #dcdad8;
  padding: 0 7px 0 5px;
}

.wells h4 {
  padding: 14px 9px 6px;
  font-size: 14.300px;
}

.wells h4:first-child {
  padding-top: 11px;
}

.well {
  height: 35px;
  padding-left: 13px;
  line-height: 33px;
  font-size: 14.300px;
  background: #fff;
  border: 1px dashed #c8c6c4;
  border-radius: 2px;
}

.well.filled {
  height: 45px;
  padding: 4px 3px;
}

.well.filled + h4 {
  padding-top: 13px;
}

.chip {
  height: 28px;
  padding: 0 4px 0 4px;
  display: flex;
  align-items: center;
  justify-content: space-between;
  line-height: 26px;
  background: #edebe9;
  border: 1px solid #b3b0ad;
  border-radius: 2px;
}

.scrollbar {
  position: absolute;
  right: 0;
  top: 2px;
  width: 7px;
  height: 235px;
  border-radius: 4px;
  background: #8a8886;
}

/* data pane */
.fields .pane-head {
  padding: 0 8px 0 11px;
}

.field-search {
  width: 214px;
  height: 30px;
  margin: 7px 0 0 5px;
  padding: 1px 0 0 15px;
  display: flex;
  align-items: center;
  gap: 9px;
  background: #fff;
  border: 1px solid #d1d1d1;
  border-bottom-color: #605e5c;
  border-radius: 5px;
  font-size: 16px;
  color: #605e5c;
}

.table-row {
  margin: 15px 0 0 19px;
  height: 24px;
  display: flex;
  align-items: center;
}

.table-row .tbl {
  margin: 6px 0 0 7px;
}

/* status bar */
.status {
  height: 28px;
  flex: none;
  display: flex;
  align-items: center;
  justify-content: space-between;
  padding: 3px 21px 0 5px;
  color: #3b3a39;
  font-size: 14.200px;
}

.zoom {
  display: flex;
  align-items: center;
  color: #605e5c;
}

.zoom span {
  margin: -3px 24px 0 16px;
  letter-spacing: -.1px;
}

/* taskbar */
.taskbar {
  height: 60px;
  flex: none;
  display: flex;
  align-items: center;
  border-top: 1px solid #000;
  background: radial-gradient(circle at 1390px 20px, #17303e, rgba(23, 40, 50, .5) 110px, transparent 300px), #202020;
  color: #fff;
}

.start {
  margin: 2px 16px 0 557px;
}

.task-search {
  width: 275px;
  height: 40px;
  margin-top: 1px;
  padding: 0 0 1px 14px;
  display: flex;
  align-items: center;
  gap: 12px;
  border: 1px solid #4d4d4d;
  border-radius: 20px;
  background: #404040;
  color: #e0e0e0;
  font-size: 15.500px;
}

.apps {
  display: flex;
  margin-left: 3px;
}

.apps span {
  width: 55px;
  height: 50px;
  margin-top: 1px;
  display: flex;
  align-items: center;
  justify-content: center;
  position: relative;
}

.apps .running::after {
  content: "";
  position: absolute;
  bottom: 0;
  width: 8px;
  height: 4px;
  border-radius: 2px;
  background: #9a9a9a;
}

.apps .current {
  width: 49px;
  margin-left: 3px;
  border-radius: 5px;
  background: #2a3a42;
}

.apps .current::after {
  width: 20px;
  background: #118dff;
}

.badge {
  position: absolute;
  left: 29px;
  top: 4px;
  width: 20px;
  height: 20px;
  border-radius: 50%;
  background: #1f7fa3;
  color: #b9e4f5;
  font-size: 11px;
  font-weight: 600;
  text-align: center;
}

.tray {
  margin-left: auto;
  padding-right: 22px;
  display: flex;
  align-items: center;
  font-size: 14px;
}

.lang {
  margin: 0 22px 0 26px;
  font-size: 13.700px;
}

.wifi {
  margin-right: 10px;
}

.speaker {
  margin-right: 11px;
}

.clock {
  width: 88px;
  margin-top: -1px;
  text-align: right;
}

/* stamp over the bottom of the window */
.watermark {
  position: absolute;
  left: 840px;
  top: 943px;
  z-index: 5;
}

.ar {
  font: bold 62px "DejaVu Sans", sans-serif;
  fill: #8a8a8a;
  stroke: #8a8a8a;
  stroke-width: 3px;
  stroke-linejoin: round;
  opacity: .2;
}

.en {
  font: bold 36px "Liberation Sans", sans-serif;
  fill: #a8a8a8;
  fill-opacity: .45;
}
```
